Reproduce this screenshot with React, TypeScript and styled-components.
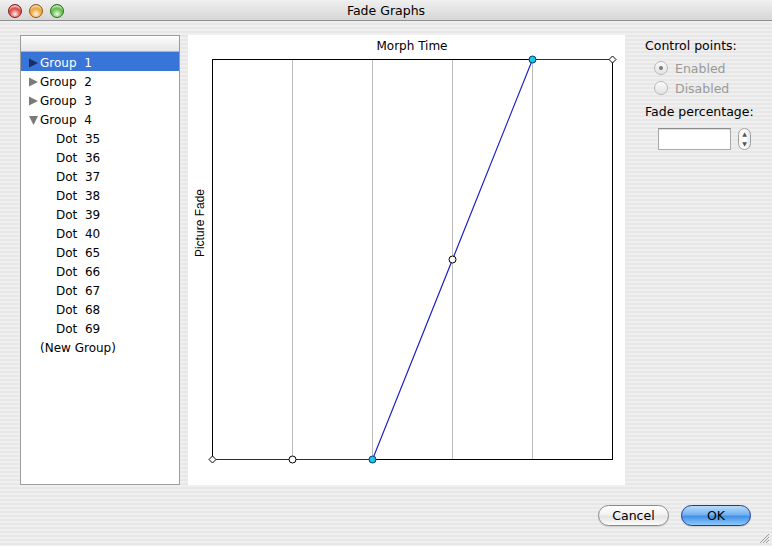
import styled, { createGlobalStyle } from 'styled-components'

const GlobalStyle = createGlobalStyle`
  html, body {
    margin: 0;
    padding: 0;
    background: #fff;
  }
  body {
    font-family: "DejaVu Sans", "Liberation Sans", sans-serif;
    font-size: 12px;
    color: #000;
  }
`

const Window = styled.div`
  width: 772px;
  height: 546px;
  display: flex;
  flex-direction: column;
  overflow: hidden;
`

const TitleBar = styled.div`
  position: relative;
  height: 21px;
  flex: none;
  display: flex;
  align-items: center;
  justify-content: center;
  padding-top: 1px;
  box-sizing: border-box;
  background: linear-gradient(#f0f0f0, #d6d6d6);
  border-bottom: 1px solid #8e8e8e;
  font-size: 12.5px;
`

const Lights = styled.div`
  position: absolute;
  left: 8px;
  top: 4px;
  display: flex;
  gap: 7px;
`

const Light = styled.span<{ $color: string; $edge: string }>`
  width: 14px;
  height: 14px;
  border-radius: 50%;
  box-sizing: border-box;
  border: 1px solid ${({ $edge }) => $edge};
  background: radial-gradient(circle at 50% 75%, #ffffffaa 0, ${({ $color }) => $color} 50%, ${({ $edge }) => $edge} 100%);
  box-shadow: inset 0 3px 2px -1px #ffffffcc;
`

const Body = styled.div`
  flex: 1;
  display: flex;
  flex-direction: column;
  padding: 14px 21px 0 20px;
  background: repeating-linear-gradient(#efefef 0 2px, #e7e7e7 2px 4px);
  position: relative;
`

const MainRow = styled.div`
  display: flex;
  height: 450px;
`

const TreeList = styled.div`
  flex: none;
  width: 160px;
  box-sizing: border-box;
  border: 1px solid #9c9c9c;
  background: #fff;
`

const TreeHeader = styled.div`
  height: 15px;
  background: linear-gradient(#fdfdfd, #e6e6e6);
  border-bottom: 1px solid #b5b5b5;
`

const TreeRow = styled.div<{ $selected?: boolean; $indent: number }>`
  height: 19px;
  display: flex;
  align-items: center;
  padding-left: ${({ $indent }) => $indent}px;
  padding-top: 3px;
  box-sizing: border-box;
  background: ${({ $selected }) => ($selected ? '#3875d7' : 'transparent')};
  color: ${({ $selected }) => ($selected ? '#fff' : '#000')};
  white-space: pre;
`

const Disclosure = styled.svg`
  width: 11px;
  height: 10px;
  flex: none;
`

const GraphPanel = styled.div`
  flex: none;
  margin-left: 8px;
  width: 437px;
  background: #fff;
  display: grid;
  grid-template-columns: 18px 412px;
  grid-template-rows: 18px 412px;
`

const GraphTitle = styled.div`
  grid-column: 2;
  text-align: center;
  padding-top: 4px;
  font-size: 12px;
`

const AxisLabel = styled.div`
  grid-column: 1;
  grid-row: 2;
  align-self: start;
  justify-self: start;
  margin-top: 136px;
  margin-left: 6px;
  writing-mode: vertical-rl;
  transform: rotate(180deg);
  font-family: "Liberation Sans", Arial, sans-serif;
  font-size: 12px;
  line-height: 13px;
`

const SidePanel = styled.div`
  flex: none;
  margin-left: 20px;
  padding-top: 3px;
  display: flex;
  flex-direction: column;
`

const Label = styled.div`
  height: 16px;
  line-height: 16px;
  white-space: nowrap;
  font-size: 12.5px;
`

const RadioRow = styled.div`
  display: flex;
  align-items: center;
  height: 20px;
  padding-left: 9px;
  color: #9a9a9a;
  font-size: 12.5px;
`

const Radio = styled.span<{ $checked?: boolean }>`
  width: 14px;
  height: 14px;
  box-sizing: border-box;
  border-radius: 50%;
  border: 1px solid #b8b8b8;
  background: linear-gradient(#fafafa, #e2e2e2);
  display: flex;
  align-items: center;
  justify-content: center;
  margin-right: 7px;
  &::after {
    content: '';
    display: ${({ $checked }) => ($checked ? 'block' : 'none')};
    width: 4px;
    height: 4px;
    border-radius: 50%;
    background: #7a7a7a;
  }
`

const FieldRow = styled.div`
  display: flex;
  align-items: center;
  gap: 7px;
  margin-top: 8px;
  padding-left: 13px;
`

const TextField = styled.div`
  width: 73px;
  height: 22px;
  box-sizing: border-box;
  background: #fff;
  border: 1px solid #a8a8a8;
  border-top-color: #8a8a8a;
  box-shadow: inset 0 1px 1px #ddd;
`

const Stepper = styled.div`
  width: 13px;
  height: 22px;
  box-sizing: border-box;
  border: 1px solid #a0a0a0;
  border-radius: 7px;
  background: linear-gradient(90deg, #f4f4f4, #fff, #e8e8e8);
  display: flex;
  flex-direction: column;
  align-items: center;
  justify-content: space-around;
  font-size: 6px;
  line-height: 6px;
  color: #555;
`

const Footer = styled.div`
  display: flex;
  justify-content: flex-end;
  gap: 12px;
  margin-top: 20px;
`

const Button = styled.button<{ $primary?: boolean }>`
  height: 21px;
  width: ${({ $primary }) => ($primary ? 70 : 71)}px;
  box-sizing: border-box;
  border-radius: 11px;
  font-family: "DejaVu Sans", "Liberation Sans", sans-serif;
  font-size: 12.5px;
  color: #000;
  padding: 0;
  border: 1px solid ${({ $primary }) => ($primary ? '#26398a' : '#8a8a8a')};
  background: ${({ $primary }) =>
    $primary
      ? 'linear-gradient(#b9dcfb 0%, #6fb0f0 48%, #3e8fe6 52%, #8ec8fb 100%)'
      : 'linear-gradient(#ffffff 0%, #f1f1f1 48%, #e2e2e2 52%, #fbfbfb 100%)'};
  box-shadow: 0 1px 1px #0002;
`

const Grip = styled.svg`
  position: absolute;
  right: 2px;
  bottom: 2px;
`

const items: { label: string; kind: 'open' | 'closed' | 'leaf' | 'new'; selected?: boolean }[] = [
  { label: 'Group  1', kind: 'closed', selected: true },
  { label: 'Group  2', kind: 'closed' },
  { label: 'Group  3', kind: 'closed' },
  { label: 'Group  4', kind: 'open' },
  ...[35, 36, 37, 38, 39, 40, 65, 66, 67, 68, 69].map((n) => ({
    label: `Dot  ${n}`,
    kind: 'leaf' as const,
  })),
  { label: '(New Group)', kind: 'new' },
]

function Tree() {
  return (
    <TreeList>
      <TreeHeader />
      {items.map((item) => (
        <TreeRow
          key={item.label}
          $selected={item.selected}
          $indent={item.kind === 'leaf' ? 35 : item.kind === 'new' ? 19 : 8}
        >
          {(item.kind === 'open' || item.kind === 'closed') && (
            <Disclosure viewBox="0 0 11 10">
              {item.kind === 'closed' ? (
                <polygon points="0,0.5 9,5 0,9.5" fill={item.selected ? '#1b2f66' : '#7a7a7a'} />
              ) : (
                <polygon points="0,1 9,1 4.5,10" fill="#7a7a7a" />
              )}
            </Disclosure>
          )}
          {item.label}
        </TreeRow>
      ))}
    </TreeList>
  )
}

const points: { x: number; y: number; shape: 'diamond' | 'open' | 'filled' }[] = [
  { x: 6.5, y: 406.5, shape: 'diamond' },
  { x: 86.5, y: 406.5, shape: 'open' },
  { x: 166.5, y: 406.5, shape: 'filled' },
  { x: 246.5, y: 206.5, shape: 'open' },
  { x: 326.5, y: 6.5, shape: 'filled' },
  { x: 406.5, y: 6.5, shape: 'diamond' },
]

function Graph() {
  return (
    <GraphPanel>
      <GraphTitle>Morph Time</GraphTitle>
      <AxisLabel>Picture Fade</AxisLabel>
      <svg width="412" height="412" viewBox="0 0 412 412" style={{ gridColumn: 2, gridRow: 2 }}>
        {[86.5, 166.5, 246.5, 326.5].map((x) => (
          <line key={x} x1={x} y1={6.5} x2={x} y2={406.5} stroke="#bdbdbd" />
        ))}
        <rect x={6.5} y={6.5} width={400} height={400} fill="none" stroke="#000" />
        <polyline
          points={points.map((p) => `${p.x},${p.y}`).join(' ')}
          fill="none"
          stroke="#1c1cc4"
          strokeWidth={1.2}
        />
        {points.map((p, i) =>
          p.shape === 'diamond' ? (
            <polygon
              key={i}
              points={`${p.x - 3.5},${p.y} ${p.x},${p.y - 3.5} ${p.x + 3.5},${p.y} ${p.x},${p.y + 3.5}`}
              fill="#fff"
              stroke="#000"
            />
          ) : (
            <circle
              key={i}
              cx={p.x}
              cy={p.y}
              r={3.5}
              fill={p.shape === 'filled' ? '#20c4ee' : '#fff'}
              stroke={p.shape === 'filled' ? '#0a3a5a' : '#000'}
            />
          )
        )}
      </svg>
    </GraphPanel>
  )
}

export default function App() {
  return (
    <Window>
      <GlobalStyle />
      <TitleBar>
        <Lights>
          <Light $color="#e0443e" $edge="#8c1a16" />
          <Light $color="#f2a52a" $edge="#9a5a0c" />
          <Light $color="#58c23a" $edge="#2d6d14" />
        </Lights>
        Fade Graphs
      </TitleBar>
      <Body>
        <MainRow>
          <Tree />
          <Graph />
          <SidePanel>
            <Label>Control points:</Label>
            <RadioRow style={{ marginTop: 4 }}>
              <Radio $checked />
              Enabled
            </RadioRow>
            <RadioRow>
              <Radio />
              Disabled
            </RadioRow>
            <Label style={{ marginTop: 6 }}>Fade percentage:</Label>
            <FieldRow>
              <TextField />
              <Stepper>
                <span>▲</span>
                <span>▼</span>
              </Stepper>
            </FieldRow>
          </SidePanel>
        </MainRow>
        <Footer>
          <Button>Cancel</Button>
          <Button $primary>OK</Button>
        </Footer>
        <Grip width="11" height="11" viewBox="0 0 11 11">
          <path d="M10 1 L1 10 M10 4 L4 10 M10 7 L7 10" stroke="#9a9a9a" strokeWidth="1" />
        </Grip>
      </Body>
    </Window>
  )
}
